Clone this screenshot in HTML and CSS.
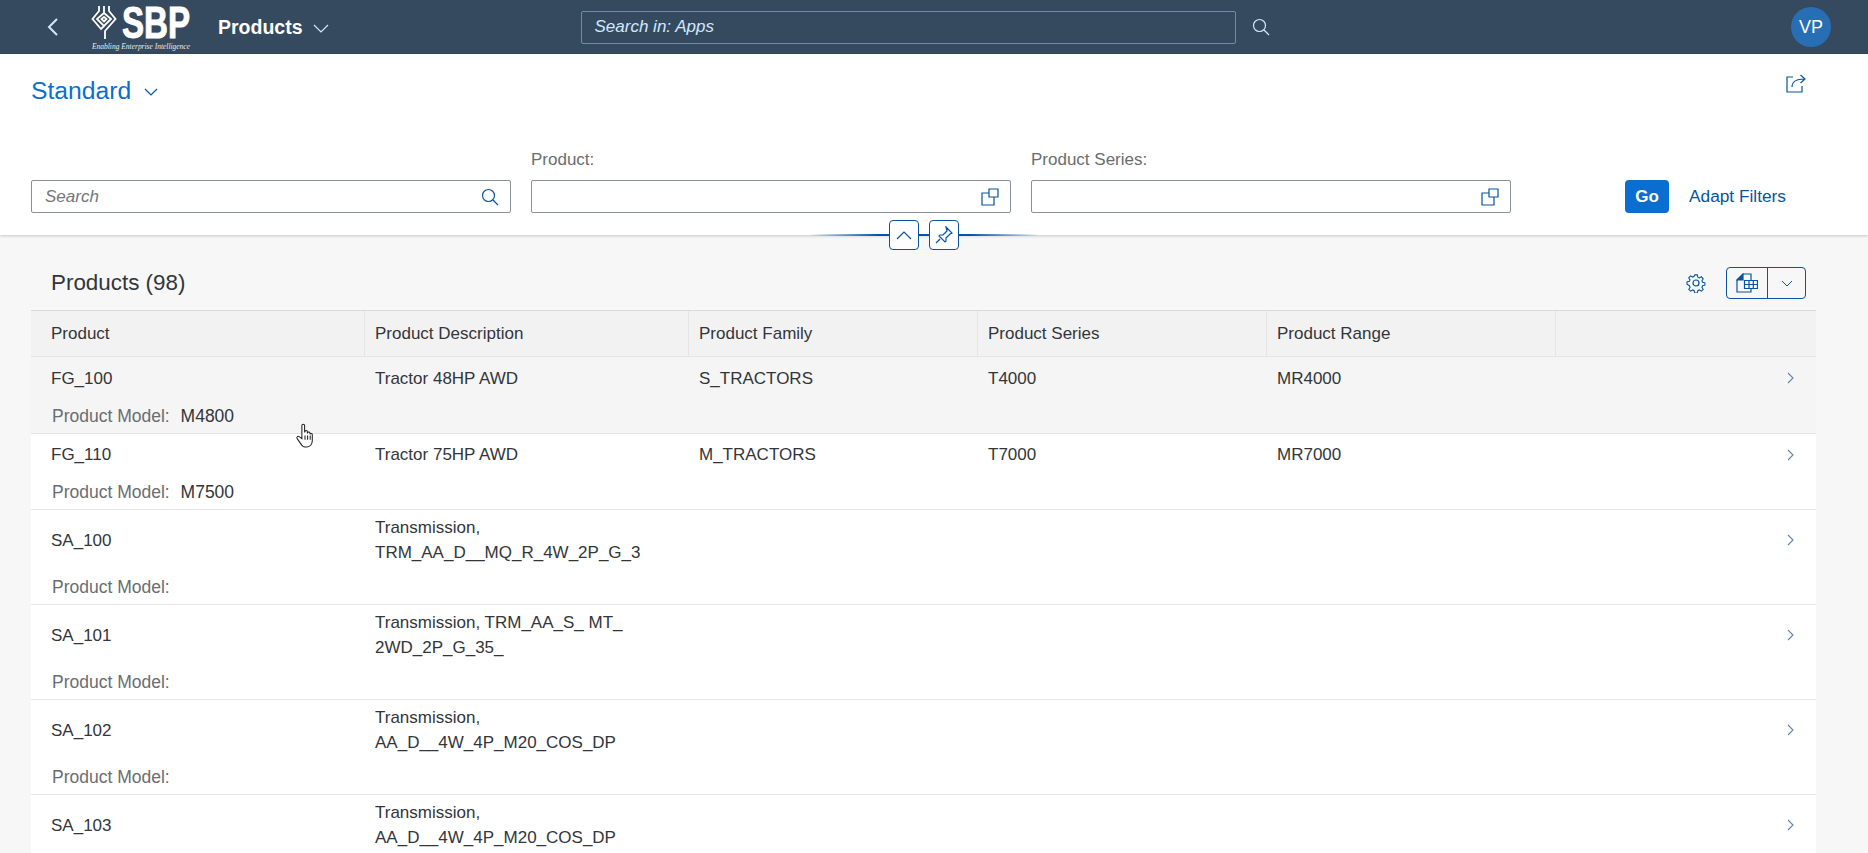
FILE: index.html
```html
<!DOCTYPE html>
<html lang="en">
<head>
  <meta charset="UTF-8" />
  <title>Products</title>
  <link rel="stylesheet" href="styles.css">
</head>
<body>
  <header class="shell">
    <svg class="back" viewBox="0 0 12 18" width="12" height="18"><path d="M10 1 2 9l8 8" /></svg>
    <svg class="logo" viewBox="0 0 100 54" width="100" height="54">
      <g class="logo-mark">
        <path d="M8 6v5l-6.500 8 8.500 10 3-3" />
        <path d="M18 6v5l6.500 8L14 31v8" />
        <path d="M13 6v7l-7 6 7 7 7-7-7-6" />
        <path d="M13 17l-2.500 2 2.500 2.500 2.500-2.500z" />
      </g>
      <text class="logo-name" x="31" y="38" textLength="68" lengthAdjust="spacingAndGlyphs">SBP</text>
      <text class="logo-tag" x="1" y="49" textLength="98" lengthAdjust="spacingAndGlyphs">Enabling Enterprise Intelligence</text>
    </svg>
    <span class="app-title">Products</span>
    <svg class="app-arrow" viewBox="0 0 16 9" width="16" height="9"><path d="M1 1l7 7 7-7" /></svg>
    <div class="shell-search">Search in: Apps</div>
    <svg class="shell-search-icon" viewBox="0 0 18 18" width="18" height="18"><circle cx="7.5" cy="7.5" r="6" /><path d="M12 12l5 5" /></svg>
    <div class="avatar">VP</div>
  </header>

  <section class="filter-area">
    <div class="title-row">
      <h1 class="variant">Standard</h1>
      <svg class="variant-arrow" viewBox="0 0 14 8" width="14" height="8"><path d="M1 1l6 6 6-6" /></svg>
      <svg class="share" viewBox="0 0 20 20" width="20" height="20">
        <path d="M7 4H1v15h15v-6" />
        <path d="M6 14c0-5 4-8 12-8M14.500 2 19 6l-4.500 4" />
      </svg>
    </div>
    <div class="filter-row">
      <div class="field">
        <div class="input">
          <span class="placeholder">Search</span>
          <svg class="input-icon" viewBox="0 0 18 18" width="18" height="18"><circle cx="7.5" cy="7.5" r="6" /><path d="M12 12l5 5" /></svg>
        </div>
      </div>
      <div class="field">
        <label>Product:</label>
        <div class="input">
          <svg class="input-icon" viewBox="0 0 18 18" width="18" height="18"><path d="M8 5H1v12h12V9" /><path d="M8 1h9v8H8z" /></svg>
        </div>
      </div>
      <div class="field">
        <label>Product Series:</label>
        <div class="input">
          <svg class="input-icon" viewBox="0 0 18 18" width="18" height="18"><path d="M8 5H1v12h12V9" /><path d="M8 1h9v8H8z" /></svg>
        </div>
      </div>
      <button class="go">Go</button>
      <span class="adapt">Adapt Filters</span>
    </div>
    <div class="collapse-line">
      <button class="mini"><svg viewBox="0 0 16 9" width="16" height="9"><path d="M1 8l7-7 7 7" /></svg></button>
      <button class="mini"><svg viewBox="0 0 18 18" width="18" height="18"><path d="M11 1l6 6-2 1-4 4v3l-1 1-6-6 1-1h3l4-4zM5 13l-4 4" /></svg></button>
    </div>
  </section>

  <main class="content">
    <div class="toolbar">
      <h2 class="table-title">Products (98)</h2>
      <svg class="gear" viewBox="0 0 20 20" width="20" height="20">
        <circle cx="10" cy="10" r="3" />
        <path d="M8.500 1h3l.5 2.600 1.700.8 2.300-1.300 2 2.200-1.400 2.200.7 1.700 2.600.6v2.600l-2.600.6-.7 1.800 1.400 2.200-2 2-2.300-1.300-1.700.8-.5 2.600h-3l-.5-2.600-1.700-.8-2.300 1.300-2-2 1.400-2.200-.7-1.800L0 11.400V8.800l2.600-.6.7-1.700-1.400-2.200 2-2.200 2.300 1.300 1.700-.8z" transform="translate(1 1) scale(.9)" />
      </svg>
      <div class="split">
        <span class="split-main">
          <svg viewBox="0 0 22 20" width="22" height="20">
            <path d="M15 7V1H7L1 7v12h14v-3" />
            <path class="fold" d="M7 1v6H1z" />
            <path d="M8.500 7.500h13v8h-13zM8.500 11.500h13M13 7.500v8M17.300 7.500v8" />
          </svg>
        </span>
        <span class="split-arrow"><svg viewBox="0 0 12 7" width="12" height="7"><path d="M1 1l5 5 5-5" /></svg></span>
      </div>
    </div>

    <div class="table">
      <div class="cols head">
        <div>Product</div>
        <div>Product Description</div>
        <div>Product Family</div>
        <div>Product Series</div>
        <div>Product Range</div>
        <div></div>
      </div>

      <div class="row hover">
        <div class="cols main">
          <div>FG_100</div><div>Tractor 48HP AWD</div><div>S_TRACTORS</div><div>T4000</div><div>MR4000</div>
          <div class="nav"><svg viewBox="0 0 7 12" width="7" height="12"><path d="M1 1l5 5-5 5" /></svg></div>
        </div>
        <div class="model"><span>Product Model:</span> M4800</div>
      </div>
      <div class="row">
        <div class="cols main second">
          <div>FG_110</div><div>Tractor 75HP AWD</div><div>M_TRACTORS</div><div>T7000</div><div>MR7000</div>
          <div class="nav"><svg viewBox="0 0 7 12" width="7" height="12"><path d="M1 1l5 5-5 5" /></svg></div>
        </div>
        <div class="model"><span>Product Model:</span> M7500</div>
      </div>
      <div class="row">
        <div class="cols main tall">
          <div>SA_100</div><div>Transmission,<br>TRM_AA_D__MQ_R_4W_2P_G_3</div><div></div><div></div><div></div>
          <div class="nav"><svg viewBox="0 0 7 12" width="7" height="12"><path d="M1 1l5 5-5 5" /></svg></div>
        </div>
        <div class="model"><span>Product Model:</span></div>
      </div>
      <div class="row">
        <div class="cols main tall">
          <div>SA_101</div><div>Transmission, TRM_AA_S_ MT_<br>2WD_2P_G_35_</div><div></div><div></div><div></div>
          <div class="nav"><svg viewBox="0 0 7 12" width="7" height="12"><path d="M1 1l5 5-5 5" /></svg></div>
        </div>
        <div class="model"><span>Product Model:</span></div>
      </div>
      <div class="row">
        <div class="cols main tall">
          <div>SA_102</div><div>Transmission,<br>AA_D__4W_4P_M20_COS_DP</div><div></div><div></div><div></div>
          <div class="nav"><svg viewBox="0 0 7 12" width="7" height="12"><path d="M1 1l5 5-5 5" /></svg></div>
        </div>
        <div class="model"><span>Product Model:</span></div>
      </div>
      <div class="row">
        <div class="cols main tall">
          <div>SA_103</div><div>Transmission,<br>AA_D__4W_4P_M20_COS_DP</div><div></div><div></div><div></div>
          <div class="nav"><svg viewBox="0 0 7 12" width="7" height="12"><path d="M1 1l5 5-5 5" /></svg></div>
        </div>
      </div>
    </div>
  </main>

  <!-- mouse pointer caught in the screenshot -->
  <svg class="cursor" viewBox="0 0 18 24" width="20" height="25">
    <path d="M6 11V2.500a1.300 1.300 0 0 1 2.600 0V9l.4-1a1.200 1.200 0 0 1 2.300.3V10l.3-.8a1.200 1.200 0 0 1 2.200.5v1.200l.2-.4a1.100 1.100 0 0 1 2 .5V17c0 3-2 6-5 6H9c-2 0-3-1-4-3l-3.500-5c-1-1.500.8-3 2.300-1.700L6 15z" />
    <path d="M9 12v4M11.500 12v4M14 12v4" />
  </svg>
</body>
</html>
```

FILE: styles.css
```css
html, body {
  height: 100%;
  overflow: hidden;
}
body {
  margin: 0;
  font-family: 'Liberation Sans', Arial, sans-serif;
  font-size: 17px;
  color: #32363a;
  background: #f7f7f7;
  position: relative;
}
svg {
  display: block;
  fill: none;
  stroke-width: 1.2;
}

/* Shell bar */
.shell {
  height: 54px;
  background: #354a5f;
  display: flex;
  align-items: center;
  padding-left: 47px;
  box-sizing: border-box;
}
.back {
  stroke: #d1e8ff;
  stroke-width: 2;
}
.logo {
  margin-left: 32px;
}
.logo-mark path {
  stroke: #fff;
  stroke-width: 1.8;
}
.logo-name {
  font-size: 44px;
  font-weight: 700;
  fill: #fff;
  stroke: #fff;
  stroke-width: 1;
}
.logo-tag {
  font-family: 'Liberation Serif', serif;
  font-style: italic;
  font-size: 9px;
  fill: #e8ecf0;
}
.app-title {
  margin-left: 27px;
  font-size: 19.500px;
  font-weight: 700;
  color: #fff;
}
.app-arrow {
  margin-left: 10px;
  margin-top: 2px;
  stroke: #d1e8ff;
}
.shell-search {
  margin-left: 252px;
  width: 655px;
  height: 33px;
  line-height: 30px;
  box-sizing: border-box;
  padding-left: 13px;
  border: 1px solid #6f8dab;
  border-radius: 2px;
  color: #d1e8ff;
  font-size: 17px;
  font-style: italic;
}
.shell-search-icon {
  margin-left: 16px;
  stroke: #d1e8ff;
}
.avatar {
  margin-left: auto;
  margin-right: 37px;
  width: 40px;
  height: 40px;
  border-radius: 50%;
  background: #286eb4;
  color: #fff;
  font-size: 18px;
  line-height: 40px;
  text-align: center;
}

/* Filter bar */
.filter-area {
  height: 181px;
  background: #fff;
  box-shadow: 0 1px 3px rgba(0, 0, 0, 0.2);
  position: relative;
  padding: 0 31px;
  box-sizing: border-box;
}
.title-row {
  height: 73px;
  display: flex;
  align-items: center;
}
.variant {
  margin: 0;
  font-size: 24.700px;
  font-weight: 400;
  color: #0a6ed1;
}
.variant-arrow {
  margin-left: 13px;
  margin-top: 2px;
  stroke: #0854a0;
}
.share {
  margin-left: auto;
  margin-right: 31px;
  margin-top: -15px;
  stroke: #0854a0;
}
.filter-row {
  margin-top: 23px;
  display: flex;
  align-items: flex-end;
  gap: 20px;
}
.field {
  width: 480px;
}
.field label {
  display: block;
  margin-bottom: 10px;
  font-size: 17px;
  color: #6a6d70;
}
.input {
  height: 33px;
  box-sizing: border-box;
  border: 1px solid #89919a;
  border-radius: 2px;
  display: flex;
  align-items: center;
  padding: 0 11px 0 13px;
}
.placeholder {
  font-size: 17px;
  font-style: italic;
  color: #74777a;
}
.input-icon {
  margin-left: auto;
  stroke: #0854a0;
}
.go {
  margin-left: 94px;
  width: 44px;
  height: 33px;
  border: none;
  border-radius: 4px;
  background: #0a6ed1;
  color: #fff;
  font: 700 17px 'Liberation Sans', Arial, sans-serif;
  padding: 0;
}
.adapt {
  line-height: 33px;
  font-size: 17.300px;
  color: #0854a0;
}
.collapse-line {
  position: absolute;
  left: 809px;
  top: 166px;
  width: 230px;
  height: 30px;
  display: flex;
  justify-content: center;
  gap: 10px;
  background: linear-gradient(90deg, transparent, #0854a0 30%, #0854a0 70%, transparent) center / 100% 2px no-repeat;
}
.mini {
  width: 30px;
  height: 30px;
  padding: 0;
  border: 1px solid #0854a0;
  border-radius: 4px;
  background: #fff;
  display: flex;
  align-items: center;
  justify-content: center;
}
.mini svg {
  stroke: #0854a0;
}

/* Table */
.content {
  padding: 0 52px 0 31px;
}
.toolbar {
  height: 75px;
  box-sizing: border-box;
  padding: 21px 10px 0 20px;
  display: flex;
  align-items: center;
}
.table-title {
  margin: 0;
  font-size: 22.400px;
  font-weight: 400;
}
.gear {
  margin-left: auto;
  stroke: #0854a0;
}
.split {
  margin-left: 20px;
  width: 80px;
  height: 32px;
  box-sizing: border-box;
  border: 1px solid #0854a0;
  border-radius: 4px;
  display: flex;
}
.split-main {
  width: 40px;
  border-right: 1px solid #0854a0;
  display: flex;
  align-items: center;
  justify-content: center;
}
.split-main svg {
  stroke: #0854a0;
}
.split-main .fold {
  fill: #0854a0;
}
.split-arrow {
  flex: 1;
  display: flex;
  align-items: center;
  justify-content: center;
}
.split-arrow svg {
  stroke: #0854a0;
  stroke-width: 1;
}
.cols {
  display: grid;
  grid-template-columns: 334px 324px 289px 289px 289px 1fr;
}
.cols > div {
  padding-left: 20px;
}
.cols > div + div {
  padding-left: 10px;
}
.head {
  height: 47px;
  box-sizing: border-box;
  background: #f2f2f2;
  border-top: 1px solid #d9d9d9;
  border-bottom: 1px solid #e5e5e5;
  font-size: 17px;
}
.head > div {
  line-height: 45px;
  border-right: 1px solid #e5e5e5;
}
.head > div:last-child {
  border-right: none;
}
.row {
  background: #fff;
  border-bottom: 1px solid #e5e5e5;
}
.row.hover {
  background: #f5f5f5;
}
.main {
  min-height: 42px;
  align-items: center;
  line-height: 25px;
  font-size: 17px;
}
.main.second {
  min-height: 41px;
}
.main.tall {
  min-height: 60px;
}
.nav {
  display: flex;
  justify-content: flex-end;
  padding-right: 22px;
}
.nav svg {
  stroke: #5f84ab;
  stroke-width: 1.1;
}
.model {
  height: 34px;
  line-height: 34px;
  padding-left: 21px;
  font-size: 17.500px;
}
.model span {
  color: #6a6d70;
  margin-right: 6px;
}
.cursor {
  position: absolute;
  left: 295px;
  top: 423px;
  fill: #fff;
  stroke: #222;
  stroke-width: 1;
}
```
